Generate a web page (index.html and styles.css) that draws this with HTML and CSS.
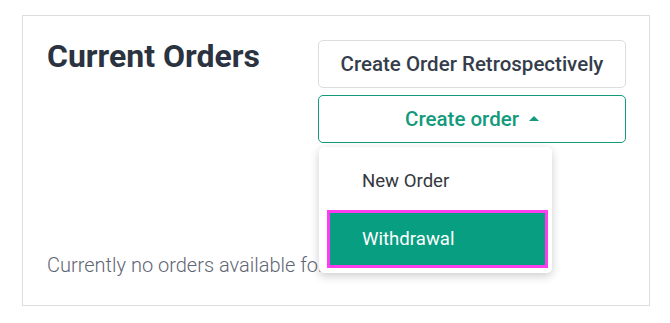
FILE: index.html
```html
<!DOCTYPE html>
<html>
<head>
<meta charset="utf-8">
<link rel="stylesheet" href="styles.css">
</head>
<body>
<div class="card">
  <div class="header">
    <h1 class="title">Current Orders</h1>
    <div class="actions">
      <button class="btn btn-plain">Create Order Retrospectively</button>
      <div class="menu-wrap">
        <button class="btn btn-green">Create order <span class="caret"></span></button>
        <div class="dropdown">
          <div class="item">New Order</div>
          <div class="item item-active">Withdrawal</div>
        </div>
      </div>
    </div>
  </div>
  <p class="empty">Currently no orders available for this resident</p>
</div>
</body>
</html>
```
FILE: styles.css
```css
* { box-sizing: border-box; }
body {
  margin: 0;
  background: #ffffff;
  font-family: Roboto, "Liberation Sans", sans-serif;
}
.card {
  margin: 15px 0 0 22px;
  width: 628px;
  height: 291px;
  border: 1px solid #dcdcdc;
  padding: 23px 23px 0 24px;
  display: flex;
  flex-direction: column;
}
.header {
  display: flex;
  justify-content: space-between;
  align-items: flex-start;
}
.title {
  margin: 0;
  font-size: 32px;
  font-weight: 700;
  line-height: 34px;
  color: #2b3240;
}
.actions {
  display: flex;
  flex-direction: column;
  gap: 7px;
  width: 308px;
  margin-top: 1px;
}
.btn {
  height: 48px;
  width: 100%;
  border-radius: 5px;
  background: #ffffff;
  font-family: Roboto, "Liberation Sans", sans-serif;
  font-size: 20.5px;
  font-weight: 500;
  display: flex;
  align-items: center;
  justify-content: center;
  padding: 0;
}
.btn-plain {
  border: 1px solid #dcdcdc;
  color: #353d4b;
}
.btn-green {
  border: 1.5px solid #139a7c;
  color: #139a7c;
  gap: 10px;
}
.caret {
  width: 0;
  height: 0;
  border-left: 5.5px solid transparent;
  border-right: 5.5px solid transparent;
  border-bottom: 5px solid #139a7c;
  margin-top: -2px;
}
.menu-wrap {
  position: relative;
}
.dropdown {
  position: absolute;
  top: 52px;
  left: 1px;
  width: 233px;
  background: #ffffff;
  border-radius: 5px;
  box-shadow: 0 3px 10px rgba(0, 0, 0, 0.2);
  padding: 0 4px 5px 8px;
  z-index: 2;
}
.item {
  height: 63px;
  padding: 4px 0 0 35px;
  display: flex;
  align-items: center;
  font-size: 18.6px;
  color: #333840;
}
.item-active {
  height: 58px;
  padding: 0 0 0 32px;
  border: 3px solid #ff3df0;
  background: #079e81;
  color: #ffffff;
}
.empty {
  margin: 110px 0 0 0;
  font-size: 20px;
  font-weight: 300;
  line-height: 24px;
  color: #5f6673;
  white-space: nowrap;
}
```
